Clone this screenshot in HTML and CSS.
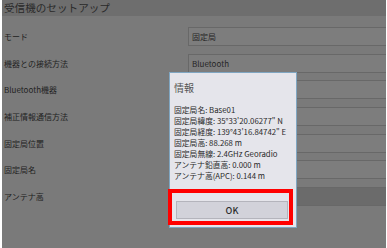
FILE: index.html
```html
<!DOCTYPE html>
<html lang="ja">

<head>
    <meta charset="UTF-8">
    <meta name="viewport" content="width=device-width, initial-scale=1.0">
    <title>受信機のセットアップ</title>
    <link rel="stylesheet" href="styles.css">
</head>

<body>

    <div class="page">
        <div class="titlebar">受信機のセットアップ</div>

        <div class="form">
            <div class="row">
                <div class="label">モード</div>
                <div class="field">固定局</div>
            </div>
            <div class="row">
                <div class="label">機器との接続方法</div>
                <div class="field">Bluetooth</div>
            </div>
            <div class="row">
                <div class="label">Bluetooth機器</div>
                <div class="field"></div>
            </div>
            <div class="row">
                <div class="label">補正情報通信方法</div>
                <div class="field"></div>
            </div>
            <div class="row">
                <div class="label">固定局位置</div>
                <div class="field"></div>
            </div>
            <div class="row">
                <div class="label">固定局名</div>
                <div class="field"></div>
            </div>
            <div class="row">
                <div class="label">アンテナ高</div>
                <div class="field field-dark"></div>
            </div>
        </div>

        <!-- 情報ダイアログ -->
        <div class="dialog">
            <div class="dialog-title">情報</div>
            <div class="dialog-body">
                <p>固定局名: Base01</p>
                <p>固定局緯度: 35°33'20.06277" N</p>
                <p>固定局経度: 139°43'16.84742" E</p>
                <p>固定局高: 88.268 m</p>
                <p>固定局無線: 2.4GHz Georadio</p>
                <p>アンテナ鉛直高: 0.000 m</p>
                <p>アンテナ高(APC): 0.144 m</p>
            </div>
            <button class="ok-button">OK</button>
        </div>

        <div class="highlight"></div>
    </div>

</body>

</html>
```

FILE: styles.css
```css
* {
    font-family: 'Noto Sans CJK JP', 'Noto Sans', sans-serif;
    box-sizing: border-box;
    padding: 0;
    margin: 0;
}

body {
    background-color: #ffffff;
    padding: 0 1px 0 2px;
}

.page {
    position: relative;
    height: 248px;
    background-color: #7a7a7a;
    overflow: hidden;
}

.titlebar {
    height: 16px;
    line-height: 16px;
    padding-left: 2px;
    font-size: 10.6px;
    color: #2a2a2a;
    background-color: #6e6e6e;
}

.form {
    padding-top: 11px;
}

.row {
    display: flex;
    align-items: center;
    height: 19px;
    margin-bottom: 7.7px;
}

.label {
    width: 186px;
    padding-left: 2px;
    font-size: 8px;
    color: #222222;
}

.field {
    flex: 1;
    height: 19px;
    line-height: 17px;
    padding-left: 3px;
    font-size: 8px;
    color: #262626;
    background-color: #7d7d7d;
    border: 1px solid #686868;
    border-right: none;
}

.field-dark {
    background-color: #6b6b6b;
}

/* ダイアログ */
.dialog {
    position: absolute;
    left: 167px;
    top: 72px;
    width: 128px;
    height: 156px;
    background-color: #e5e5eb;
    border: 1px solid #7fa6c2;
    padding: 0 4px;
}

.dialog-title {
    padding-top: 8px;
    line-height: 14px;
    font-size: 10px;
    color: #555555;
}

.dialog-body {
    margin-top: 8.5px;
}

.dialog-body p {
    line-height: 11px;
    font-size: 7.8px;
    color: #2a2a2a;
    white-space: nowrap;
}

.ok-button {
    display: block;
    width: 112px;
    height: 18px;
    margin: 20.5px 0 0 2px;
    font-size: 9px;
    font-weight: 500;
    color: #2e2e2e;
    background-color: #d2d2da;
    border: 1px solid #b4b4bc;
}

.highlight {
    position: absolute;
    left: 166px;
    top: 189px;
    width: 125px;
    height: 36px;
    border: 4px solid #ff0000;
}
```
